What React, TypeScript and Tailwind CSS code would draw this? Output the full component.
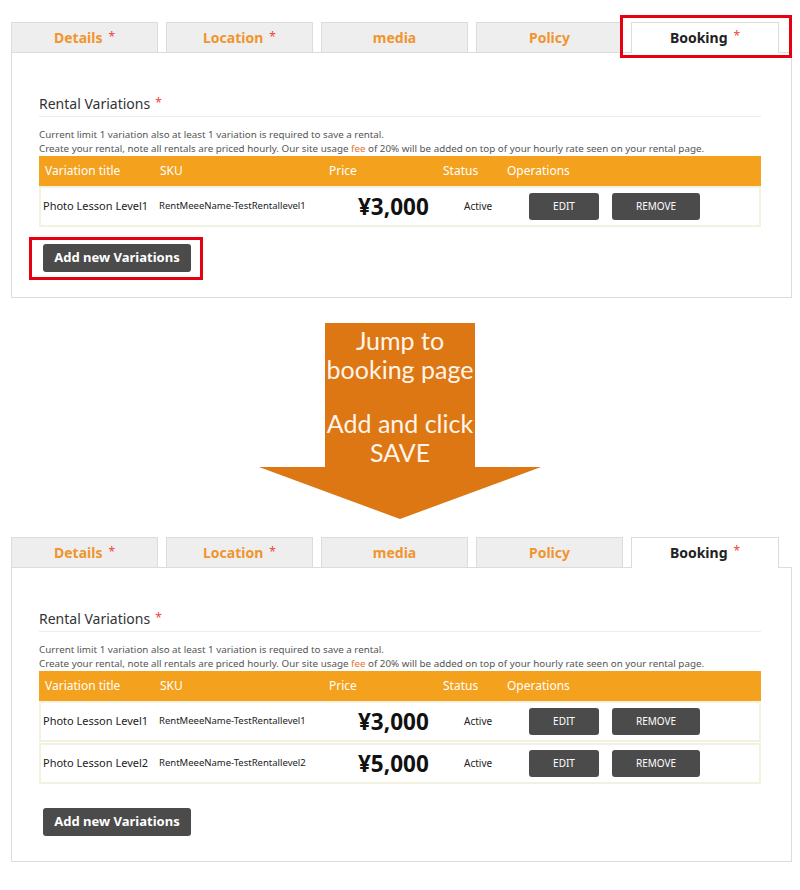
import React from "react";

// One row of the variations table
interface Variation {
  title: string;
  sku: string;
  price: string;
}

const tabs = [
  { label: "Details", required: true },
  { label: "Location", required: true },
  { label: "media", required: false },
  { label: "Policy", required: false },
  { label: "Booking", required: true },
];

function Tabs({ highlight }: { highlight: boolean }) {
  return (
    <div className="flex gap-2 items-end">
      {tabs.map((t) => {
        const active = t.label === "Booking";
        return (
          <div
            key={t.label}
            className={
              active
                ? "relative w-[148px] h-[31px] -mb-px pb-[2px] bg-white border border-b-0 border-[#dcdcdc] flex items-center justify-center text-[14px] font-bold text-[#222]"
                : "w-[147px] h-[30px] bg-[#eeeeee] border border-b-0 border-[#dcdcdc] flex items-center justify-center text-[14px] font-bold text-[#f0952e]"
            }
          >
            <span>{t.label}</span>
            {t.required && <span className="relative -top-[1px] ml-[6px] text-[12px] font-normal text-[#f0443c]">*</span>}
            {active && highlight && (
              <div className="absolute -left-[12px] -right-[14px] -top-[8px] -bottom-[5px] border-[3px] border-[#e60012]" />
            )}
          </div>
        );
      })}
    </div>
  );
}

function Row({ v }: { v: Variation }) {
  return (
    <div className="flex items-center h-[41px] border-2 border-[#f3f1df]">
      <div className="w-[116px] pl-[2px] text-[11px] text-[#222]">{v.title}</div>
      <div className="w-[170px] pl-[2px] text-[9.5px] text-[#222]">{v.sku}</div>
      <div className="w-[114px] pl-[31px] text-[22.5px] font-bold text-[#111]">{v.price}</div>
      <div className="w-[64px] pl-[23px] text-[10px] text-[#222]">Active</div>
      <div className="flex items-center gap-[13px] pl-[24px]">
        <button className="w-[70px] h-[27px] bg-[#4b4b4b] rounded-[3px] text-white text-[10px]">EDIT</button>
        <button className="w-[88px] h-[27px] bg-[#4b4b4b] rounded-[3px] text-white text-[10px]">REMOVE</button>
      </div>
    </div>
  );
}

function Panel({ rows, highlight }: { rows: Variation[]; highlight: boolean }) {
  return (
    <div className="w-[781px]">
      <Tabs highlight={highlight} />
      <div className="border border-[#dcdcdc] pl-[27px] pr-[30px] pt-[40px] pb-[25px]">
        <div className="flex items-center text-[14px] text-[#333] pb-[2px] border-b border-[#ececec]">
          Rental Variations
          <span className="relative -top-[1px] ml-[5px] text-[12px] text-[#f0443c]">*</span>
        </div>
        <div className="mt-[11px] text-[9.8px] leading-[14px] text-[#555]">
          <p>Current limit 1 variation also at least 1 variation is required to save a rental.</p>
          <p>
            Create your rental, note all rentals are priced hourly. Our site usage{" "}
            <span className="text-[#e8722c]">fee</span> of 20% will be added on top of your hourly rate seen on
            your rental page.
          </p>
        </div>
        <div className="flex items-center h-[30px] bg-[#f4a11d] text-white text-[12px]">
          <div className="w-[116px] pl-[6px]">Variation title</div>
          <div className="w-[170px] pl-[5px]">SKU</div>
          <div className="w-[114px] pl-[4px]">Price</div>
          <div className="w-[64px] pl-[4px]">Status</div>
          <div className="pl-[4px]">Operations</div>
        </div>
        <div className="flex flex-col gap-[1px]">
          {rows.map((r) => (
            <Row key={r.sku} v={r} />
          ))}
        </div>
        <div className={rows.length > 1 ? "mt-[24px] pl-[4px]" : "mt-[17px] pl-[4px]"}>
          <div className="relative inline-block">
            <button className="w-[148px] h-[28px] bg-[#4b4b4b] rounded-[3px] text-white text-[13px] font-bold">
              Add new Variations
            </button>
            {highlight && (
              <div className="absolute -left-[14px] -right-[12px] -top-[7px] -bottom-[8px] border-[3px] border-[#e60012]" />
            )}
          </div>
        </div>
      </div>
    </div>
  );
}

function Arrow() {
  return (
    <div className="flex flex-col items-center">
      <div
        className="w-[150px] h-[144px] bg-[#dd7714] flex flex-col items-center pt-[3px] text-[25px] leading-[29px] text-[#fff4ea]"
        style={{ fontFamily: "Lato, sans-serif" }}
      >
        <span>Jump to</span>
        <span>booking page</span>
        <span className="h-[27px]" />
        <span>Add and click</span>
        <span>SAVE</span>
      </div>
      <svg width="282" height="52" viewBox="0 0 282 52" className="block">
        <polygon points="0,0 282,0 141,52" fill="#dd7714" />
      </svg>
    </div>
  );
}

export default function App() {
  const first: Variation[] = [{ title: "Photo Lesson Level1", sku: "RentMeeeName-TestRentallevel1", price: "¥3,000" }];
  const second: Variation[] = [
    ...first,
    { title: "Photo Lesson Level2", sku: "RentMeeeName-TestRentallevel2", price: "¥5,000" },
  ];

  return (
    <div
      className="w-[800px] h-[890px] bg-white pl-[11px] pt-[22px]"
      style={{ fontFamily: "'Noto Sans', 'Noto Sans CJK JP', sans-serif" }}
    >
      <Panel rows={first} highlight />
      <div className="w-[778px] pt-[25px] pb-[18px]">
        <Arrow />
      </div>
      <Panel rows={second} highlight={false} />
    </div>
  );
}
